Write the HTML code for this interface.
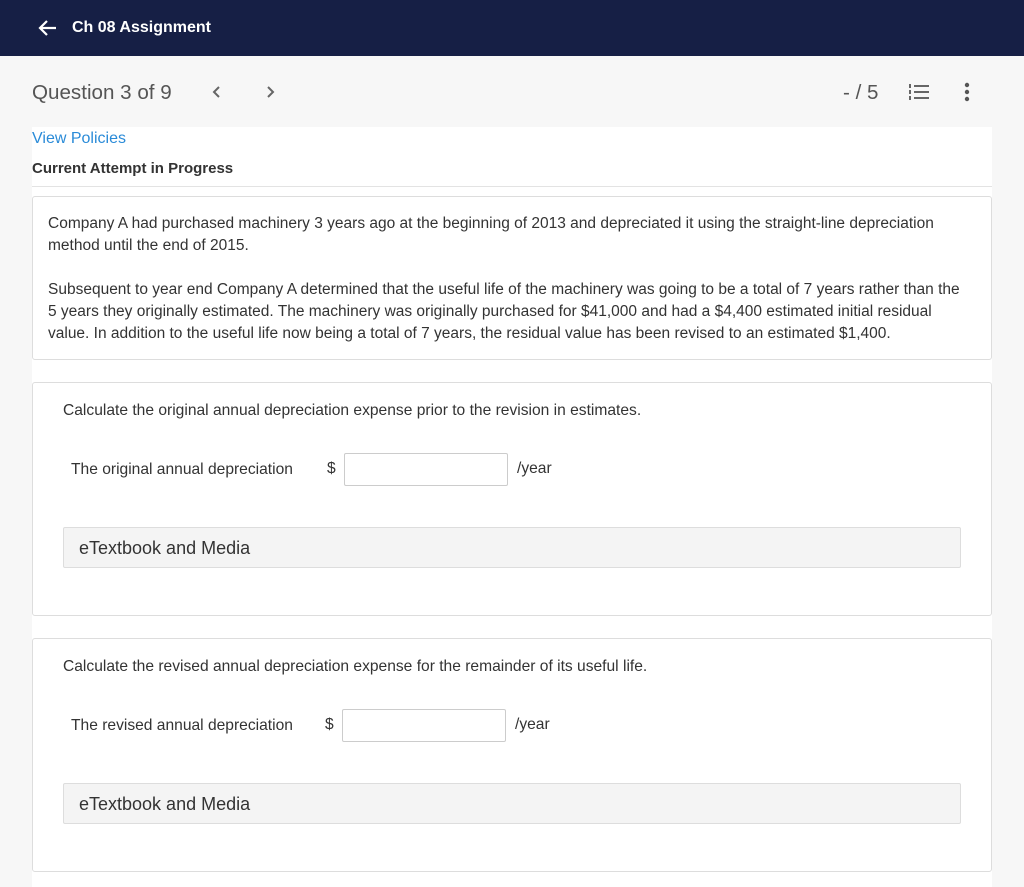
<!DOCTYPE html>
<html><head><style>
*{margin:0;padding:0;box-sizing:border-box}
body{width:1024px;height:879px;background:#f7f7f7;font-family:"Liberation Sans",sans-serif;color:#333;position:relative;overflow:hidden}
.a{position:absolute;white-space:nowrap}
.hdr{position:absolute;left:0;top:0;width:1024px;height:56px;background:#161f45}
.white{position:absolute;left:32px;top:127px;width:960px;height:760px;background:#fff}
.box{position:absolute;left:32px;width:960px;border:1px solid #ddd;border-radius:3px;background:#fff}
.et{position:absolute;left:63px;width:898px;height:41px;background:#f4f4f4;border:1px solid #ddd;border-radius:2px;font-size:18px;color:#333;padding:10px 15px}
.inp{position:absolute;width:164px;height:33px;border:1px solid #ccc;border-radius:2px;background:#fff}
p{font-size:15.5px;line-height:22px;color:#333;white-space:nowrap}
.t{font-size:15.6px}
</style></head><body>
<div class="hdr"></div>
<svg class="a" style="left:38px;top:19px" width="20" height="18" viewBox="0 0 20 18"><path d="M18 9H3M9 2L2 9l7 7" stroke="#fff" stroke-width="2.2" fill="none"/></svg>
<div class="a" style="left:72px;top:19px;font-size:16px;font-weight:bold;color:#fff">Ch 08 Assignment</div>
<div class="a" style="left:32px;top:81px;font-size:20.6px;color:#555">Question 3 of 9</div>
<svg class="a" style="left:212px;top:85px" width="10" height="14"><path d="M7 2L2 7l5 5" stroke="#666" stroke-width="2" fill="none"/></svg>
<svg class="a" style="left:265px;top:85px" width="10" height="14"><path d="M3 2l5 5-5 5" stroke="#666" stroke-width="2" fill="none"/></svg>
<div class="a" style="left:843px;top:81px;font-size:20.6px;color:#555">- / 5</div>
<svg class="a" style="left:908px;top:83px" width="22" height="18"><g fill="#666"><rect x="6" y="2" width="15" height="2"/><rect x="6" y="8" width="15" height="2"/><rect x="6" y="14" width="15" height="2"/><rect x="1" y="1" width="2" height="4"/><rect x="1" y="7" width="2" height="4"/><rect x="1" y="13" width="2" height="4"/></g></svg>
<svg class="a" style="left:963px;top:82px" width="8" height="20"><g fill="#555"><circle cx="4" cy="3" r="2.2"/><circle cx="4" cy="10" r="2.2"/><circle cx="4" cy="17" r="2.2"/></g></svg>
<div class="white"></div>
<div class="a" style="left:32px;top:130px;font-size:16px;color:#2a8bd8">View Policies</div>
<div class="a" style="left:32px;top:160px;font-size:15px;font-weight:bold;color:#333">Current Attempt in Progress</div>
<div class="a" style="left:32px;top:186px;width:960px;height:1px;background:#e3e3e3"></div>
<div class="box" style="top:196px;height:164px;padding:16px 15px">
<p>Company A had purchased machinery 3 years ago at the beginning of 2013 and depreciated it using the straight-line depreciation<br>method until the end of 2015.</p>
<p style="margin-top:22px">Subsequent to year end Company A determined that the useful life of the machinery was going to be a total of 7 years rather than the<br>5 years they originally estimated. The machinery was originally purchased for $41,000 and had a $4,400 estimated initial residual<br>value. In addition to the useful life now being a total of 7 years, the residual value has been revised to an estimated $1,400.</p>
</div>
<div class="box" style="top:382px;height:234px"></div>
<div class="a t" style="left:63px;top:402px">Calculate the original annual depreciation expense prior to the revision in estimates.</div>
<div class="a t" style="left:71px;top:461px">The original annual depreciation</div>
<div class="a t" style="left:327px;top:460px">$</div>
<div class="inp" style="left:344px;top:453px"></div>
<div class="a t" style="left:517px;top:460px">/year</div>
<div class="et" style="top:527px">eTextbook and Media</div>
<div class="box" style="top:638px;height:234px"></div>
<div class="a t" style="left:63px;top:658px">Calculate the revised annual depreciation expense for the remainder of its useful life.</div>
<div class="a t" style="left:71px;top:717px">The revised annual depreciation</div>
<div class="a t" style="left:325px;top:716px">$</div>
<div class="inp" style="left:342px;top:709px"></div>
<div class="a t" style="left:515px;top:716px">/year</div>
<div class="et" style="top:783px">eTextbook and Media</div>
</body></html>
